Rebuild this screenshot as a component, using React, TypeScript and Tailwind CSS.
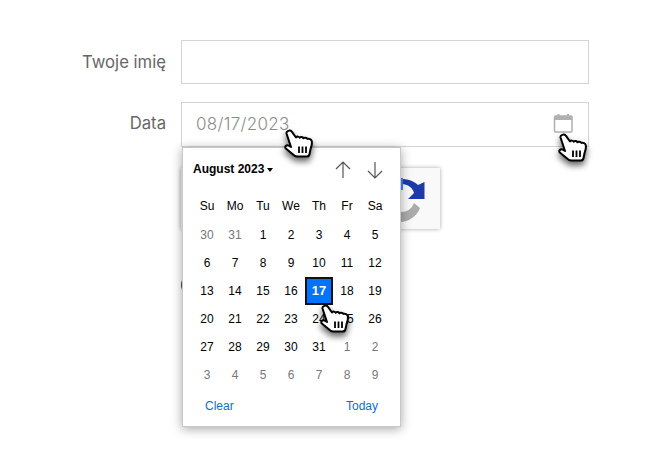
import React from 'react';

const WEEKDAYS = ['Su', 'Mo', 'Tu', 'We', 'Th', 'Fr', 'Sa'];

const DAYS: { d: number; muted?: boolean }[] = [
  { d: 30, muted: true },
  { d: 31, muted: true },
  ...Array.from({ length: 31 }, (_, i) => ({ d: i + 1 })),
  ...Array.from({ length: 9 }, (_, i) => ({ d: i + 1, muted: true })),
];

function Hand({ className }: { className: string }) {
  return (
    <svg
      viewBox="0 0 30 30"
      width="30"
      height="30"
      className={`absolute z-20 drop-shadow-[0_4px_3px_rgba(0,0,0,0.6)] ${className}`}
    >
      <path
        d="M2.500 4.500C2 2 6 .5 7.800 2.700L12 8.500C13 7.200 15 7.400 15.800 8.700C16.800 7.500 18.800 7.900 19.400 9.300C20.400 8.300 22.600 8.600 23.400 9.900C25 9.400 27.300 10.300 27.700 12C28.300 14.500 27.800 16.500 26.800 19L25.500 25C25.200 26.800 24.300 27.500 22.800 27.500H13C11 27.500 10 26.500 8.500 25L1.800 19.500C.4 17.800 2.300 15.500 4.300 16.500L7 18L2.500 4.500Z"
        fill="#fff"
        stroke="#000"
        strokeWidth="2"
        strokeLinejoin="round"
      />
      <path d="M15 17.500v6.500M18.500 17.500v6.500M22 17.500v6.500" stroke="#000" strokeWidth="1.800" fill="none" />
    </svg>
  );
}

function CalendarPopup() {
  return (
    <div className="absolute left-0 top-[44px] z-10 flex h-[280px] w-[219px] flex-col border border-[#c8c8c8] bg-white px-[10px] font-['Liberation_Sans',sans-serif] text-[12px] text-black shadow-[0_2px_10px_rgba(0,0,0,0.35)]">
      <div className="flex h-[43px] items-center justify-between pt-[1px]">
        <div className="flex items-center gap-[3px] pb-[2px] text-[12px] font-bold">
          August 2023
          <span className="mt-[1px] h-0 w-0 border-x-[3.5px] border-t-[4px] border-x-transparent border-t-black" />
        </div>
        <div className="mr-[7px] flex items-center gap-[16px] text-[#555]">
          <svg width="16" height="18" viewBox="0 0 16 18" fill="none" stroke="currentColor" strokeWidth="1.200">
            <path d="M8 1v16M1 8l7-7 7 7" />
          </svg>
          <svg width="16" height="18" viewBox="0 0 16 18" fill="none" stroke="currentColor" strokeWidth="1.200">
            <path d="M8 1v16M1 10l7 7 7-7" />
          </svg>
        </div>
      </div>
      <div className="grid grid-cols-[repeat(7,28px)]">
        {WEEKDAYS.map((w) => (
          <div key={w} className="flex h-[30px] items-center justify-center pb-[1px]">
            {w}
          </div>
        ))}
        {DAYS.map((c, i) => {
          const isToday = !c.muted && c.d === 17;
          return (
            <div key={i} className="flex h-[28px] items-center justify-center">
              {isToday ? (
                <span className="flex h-[28px] w-[28px] items-center justify-center border-2 border-[#111] bg-[#0073ff] text-[13px] font-bold text-white">
                  {c.d}
                </span>
              ) : (
                <span className={c.muted ? 'text-[#777]' : ''}>{c.d}</span>
              )}
            </div>
          );
        })}
      </div>
      <div className="mt-[3px] flex items-center justify-between px-[12px] pt-[5px] text-[#0a6fd8]">
        <span>Clear</span>
        <span>Today</span>
      </div>
    </div>
  );
}

export default function App() {
  return (
    <div className="relative h-[467px] w-[662px] overflow-hidden bg-white pt-[40px] font-['Inter',sans-serif]">
      <div className="flex items-center">
        <label className="w-[166px] pt-[2px] text-right text-[16.7px] text-[#666]">Twoje imię</label>
        <div className="ml-[15px] h-[44px] w-[408px] border border-[#d4d4d4] bg-white" />
      </div>
      <div className="relative mt-[18px] flex items-center">
        <label className="w-[166px] pb-[1px] text-right text-[16.7px] text-[#666]">Data</label>
        <div className="relative ml-[15px] flex h-[45px] w-[408px] items-center justify-between border border-[#d4d4d4] bg-white pl-[14px] pr-[15px]">
          <span className="text-[17px] font-light tracking-[0.3px] text-[#8c8c8c]">08/17/2023</span>
          <svg width="20" height="20" viewBox="0 0 20 20" fill="none" className="mb-[3px]">
            <rect x="1.500" y="3" width="17.500" height="16" rx="1" stroke="#b0b0b0" strokeWidth="1.500" />
            <path d="M1.500 3h17.500v4H1.500z" fill="#b0b0b0" />
            <path d="M5.500 1v3M15 1v3" stroke="#b0b0b0" strokeWidth="2" />
          </svg>
          <CalendarPopup />
          <Hand className="left-[102px] top-[26px]" />
          <Hand className="left-[376px] top-[30px]" />
        </div>
      </div>
      <div className="ml-[181px] mt-[21px] flex h-[61px] w-[259px] items-center justify-end bg-[#f9f9f9] pr-[15px] shadow-[0_0_4px_rgba(0,0,0,0.35)]">
        <svg width="44" height="50" viewBox="381 174 44 50">
          <path d="M381 200A22 22 0 0 1 418 185L424.500 182V199H408L414 193A11 11 0 0 0 390 200Z" fill="#1c3aa9" />
          <path d="M400 178H403V190H400Z" fill="#4285f4" />
          <path d="M414 203L420 208A22 22 0 0 1 400 222V212A13 13 0 0 0 414 203Z" fill="#ababab" />
        </svg>
      </div>
      <div className="ml-[181px] mt-[45px] h-[22px] w-[22px] rounded-full border-2 border-[#444]" />
      <Hand className="left-[320px] top-[304px]" />
    </div>
  );
}
